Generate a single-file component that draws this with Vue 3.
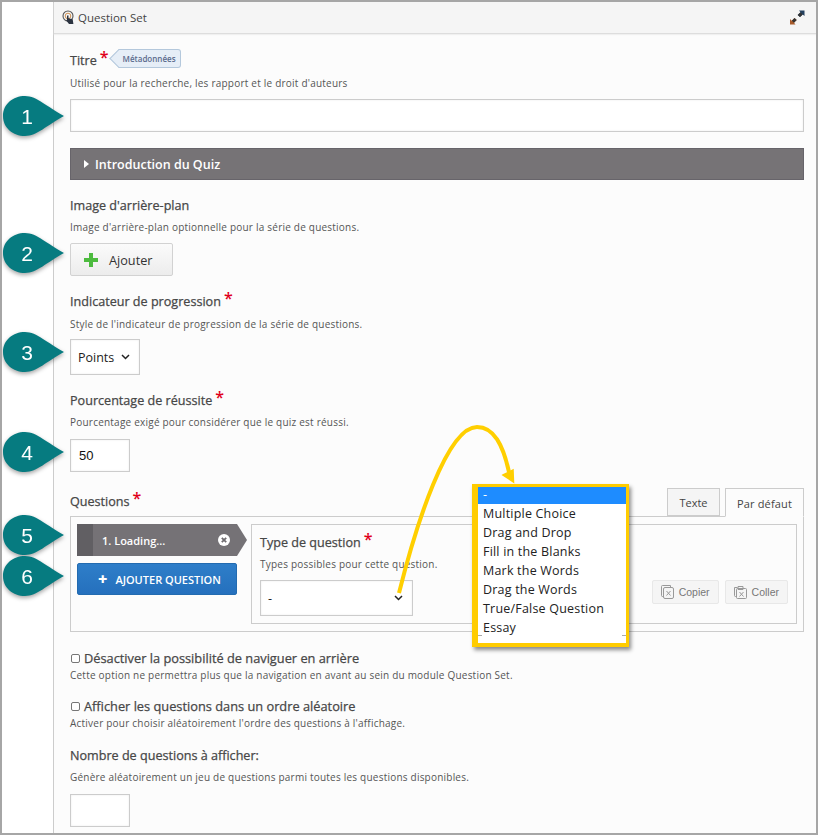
<script setup>
const callouts = [
  { n: 1, y: 117 },
  { n: 2, y: 254 },
  { n: 3, y: 353 },
  { n: 4, y: 453 },
  { n: 5, y: 536 },
  { n: 6, y: 577 }
]
const options = ['Multiple Choice', 'Drag and Drop', 'Fill in the Blanks', 'Mark the Words', 'Drag the Words', 'True/False Question', 'Essay']
</script>

<template>
  <div class="frame">
    <div class="rail"></div>
    <main class="panel">
      <header class="head">
        <div class="head-title">
          <svg class="qs-icon" width="13" height="15" viewBox="0 0 13 15" fill="none">
            <circle cx="6" cy="6" r="5" stroke="#555" stroke-width="1.100" />
            <circle cx="6" cy="6" r="2.800" stroke="#c9853f" stroke-width="0.900" />
            <path d="M5 5.400h1.500v2.900l4.200 .9.700 4.800H7L4 10.300l1-.5z" fill="#2b3340" />
          </svg>
          <span>Question Set</span>
        </div>
        <svg width="16" height="15" viewBox="0 0 16 15">
          <path d="M10 0.500H15.500V6L13.700 4.400 11 7.100 8.700 5 11.500 2.200z" fill="#24405f" />
          <path d="M1 9L2.800 10.700 5.500 8 7.700 10 5 12.800 6.500 14.500H1z" fill="#a85a2a" />
          <path d="M2.800 10.700L5.500 8 7.700 10 5 12.800zM11 7.100L8.700 5 11.500 2.200 13.700 4.400z" fill="#333" />
        </svg>
      </header>

      <div class="form">
        <section class="f-title">
          <div class="label-row">
            <span class="label">Titre</span><span class="req">*</span>
            <span class="tag"><span class="tag-text">Métadonnées</span></span>
          </div>
          <p class="desc">Utilisé pour la recherche, les rapport et le droit d'auteurs</p>
          <input class="input wide" type="text" />
        </section>

        <div class="collapse">
          <span class="caret"></span>
          <span>Introduction du Quiz</span>
        </div>

        <section class="f-image">
          <div class="label-row"><span class="label">Image d'arrière-plan</span></div>
          <p class="desc">Image d'arrière-plan optionnelle pour la série de questions.</p>
          <button class="add-btn" type="button">
            <svg width="14" height="14" viewBox="0 0 14 14"><path d="M5 0h4v5h5v4H9v5H5V9H0V5h5z" fill="#4dbb3f" /></svg>
            <span>Ajouter</span>
          </button>
        </section>

        <section class="f-progress">
          <div class="label-row"><span class="label">Indicateur de progression</span><span class="req">*</span></div>
          <p class="desc">Style de l'indicateur de progression de la série de questions.</p>
          <div class="select points">
            <span>Points</span>
            <svg width="9" height="6" viewBox="0 0 9 6" fill="none"><path d="M1 1l3.500 3.500L8 1" stroke="#222" stroke-width="1.500" /></svg>
          </div>
        </section>

        <section class="f-pass">
          <div class="label-row"><span class="label">Pourcentage de réussite</span><span class="req">*</span></div>
          <p class="desc">Pourcentage exigé pour considérer que le quiz est réussi.</p>
          <input class="input small" type="text" value="50" />
        </section>

        <section class="f-questions">
          <div class="q-head">
            <div class="label-row"><span class="label">Questions</span><span class="req">*</span></div>
            <div class="tabs">
              <span class="tab">Texte</span>
              <span class="tab active">Par défaut</span>
            </div>
          </div>
          <div class="q-box">
            <div class="q-side">
              <div class="q-item">
                <span class="q-grip"></span>
                <span class="q-name">1. Loading...</span>
                <svg class="q-x" width="12" height="12" viewBox="0 0 12 12">
                  <circle cx="6" cy="6" r="6" fill="#fff" />
                  <path d="M3.800 3.800l4.400 4.400M8.200 3.800L3.800 8.200" stroke="#6f6c70" stroke-width="1.800" />
                </svg>
              </div>
              <button class="q-add" type="button"><b>+</b><span>AJOUTER QUESTION</span></button>
            </div>
            <div class="q-main">
              <div class="label-row"><span class="label">Type de question</span><span class="req">*</span></div>
              <p class="desc">Types possibles pour cette question.</p>
              <div class="q-row">
                <div class="select type">
                  <span>-</span>
                  <svg width="9" height="6" viewBox="0 0 9 6" fill="none"><path d="M1 1l3.500 3.500L8 1" stroke="#222" stroke-width="1.500" /></svg>
                </div>
                <div class="q-tools">
                  <span class="tool">
                    <svg width="13" height="14" viewBox="0 0 13 14" fill="none" stroke="#999"><rect x="2.500" y="2.500" width="10" height="11" rx="1.500" /><path d="M2.500 11.500h-1a1 1 0 0 1-1-1V1.500a1 1 0 0 1 1-1h8v2M5.500 6l4 4.500M9.500 6l-4 4.500" /></svg>
                    Copier
                  </span>
                  <span class="tool">
                    <svg width="13" height="14" viewBox="0 0 13 14" fill="none" stroke="#999"><rect x="2.500" y="3.500" width="10" height="10" rx="1" /><path d="M2.500 11.500h-1a1 1 0 0 1-1-1V2.500h3M4 1.500h5v3H4zM5.500 7l4 4.500M9.500 7l-4 4.500" /></svg>
                    Coller
                  </span>
                </div>
              </div>
            </div>
          </div>
        </section>

        <section class="f-check first">
          <label class="check"><input type="checkbox" /><span>Désactiver la possibilité de naviguer en arrière</span></label>
          <p class="desc tight">Cette option ne permettra plus que la navigation en avant au sein du module Question Set.</p>
        </section>
        <section class="f-check">
          <label class="check"><input type="checkbox" /><span>Afficher les questions dans un ordre aléatoire</span></label>
          <p class="desc tight">Activer pour choisir aléatoirement l'ordre des questions à l'affichage.</p>
        </section>

        <section class="f-count">
          <div class="label-row"><span class="label">Nombre de questions à afficher:</span></div>
          <p class="desc">Génère aléatoirement un jeu de questions parmi toutes les questions disponibles.</p>
          <input class="input small" type="text" />
        </section>
      </div>
    </main>

    <svg
      v-for="c in callouts"
      :key="c.n"
      class="callout"
      :style="{ top: c.y - 24 + 'px' }"
      width="68"
      height="46"
      viewBox="0 0 68 46"
    >
      <path d="M3 21C3 9 13 1 25 1 37 1 47 12 64 21 47 30 37 41 25 41 13 41 3 33 3 21z" fill="#067b80" />
      <text x="27" y="29" text-anchor="middle" class="callout-num">{{ c.n }}</text>
    </svg>

    <svg class="arrow" width="818" height="835" viewBox="0 0 818 835" fill="none">
      <path d="M399 593C416 525 447 427 477 427 494 427 503 445 509 472" stroke="#ffcf00" stroke-width="4" />
      <path d="M503 475L513 470 513.500 482z" fill="#ffcf00" stroke="#ffcf00" stroke-width="1.500" />
    </svg>

    <div class="listbox">
      <div class="opt selected">-</div>
      <div v-for="o in options" :key="o" class="opt">{{ o }}</div>
      <span class="tick left"></span>
      <span class="tick right"></span>
    </div>
  </div>
</template>

<style scoped>
.frame {
  position: relative;
  width: 818px;
  height: 835px;
  box-sizing: border-box;
  display: flex;
  background: #fff;
  border: 2px solid #a6a6a6;
  overflow: hidden;
  font-family: "Open Sans", "Liberation Sans", sans-serif;
  color: #444;
}
.rail {
  width: 51px;
  flex: none;
}
.panel {
  flex: 1;
  min-width: 0;
  border-left: 1px solid #ccc;
  background: #fcfcfc;
}
.head {
  height: 32px;
  box-sizing: border-box;
  padding: 0 11px 0 8px;
  display: flex;
  align-items: center;
  justify-content: space-between;
  background: #f5f5f5;
  border-bottom: 1px solid #ddd;
  box-shadow: 0 1px 1px #f0f0f0;
  font-size: 11.500px;
  color: #444;
}
.head-title {
  display: flex;
  align-items: center;
  gap: 3px;
}
.form {
  padding: 0 12px 0 16px;
}
.label-row {
  display: flex;
  align-items: flex-start;
  height: 20px;
}
.label {
  margin-top: 1px;
  font-size: 12.600px;
  font-weight: 400;
  -webkit-text-stroke: 0.250px #474747;
  line-height: 20px;
  color: #474747;
}
.req {
  color: #e0001b;
  font-size: 16px;
  font-weight: 600;
  line-height: 16px;
  margin-left: 3px;
  margin-top: -1px;
}
.tag {
  position: relative;
  margin-left: 9px;
  margin-top: -1px;
  height: 19px;
  padding: 0 4px 0 5px;
  font-size: 8px;
  font-weight: 600;
  line-height: 17px;
  color: #5a6a8c;
  background: #e6eef7;
  border: 1px solid #b4c8dc;
  border-left: none;
  border-radius: 0 3px 3px 0;
  box-sizing: border-box;
}
.tag::before {
  content: "";
  position: absolute;
  left: -6px;
  top: 2px;
  width: 12px;
  height: 12px;
  background: #e6eef7;
  border-left: 1px solid #b4c8dc;
  border-bottom: 1px solid #b4c8dc;
  transform: rotate(45deg);
}
.tag-text {
  position: relative;
}
.desc {
  margin: 5px 0 0;
  font-size: 10px;
  line-height: 14px;
  letter-spacing: 0.220px;
  color: #555;
}
.desc.tight {
  margin-top: 0;
}
.input {
  display: block;
  box-sizing: border-box;
  height: 33px;
  margin-top: 9px;
  border: 1px solid #ccc;
  background: #fff;
  box-shadow: inset 0 0 2px #e6e6e6;
  outline: none;
  font-family: "Liberation Sans", sans-serif;
  font-size: 13px;
  color: #111;
  padding: 0 8px;
}
.input.wide {
  width: 100%;
}
.input.small {
  width: 60px;
}
.f-title {
  padding-top: 16px;
}
.f-title .desc {
  margin-top: 6px;
}
.collapse {
  margin-top: 16px;
  height: 32px;
  box-sizing: border-box;
  display: flex;
  align-items: center;
  gap: 6px;
  padding-left: 13px;
  background: #767376;
  border: 1px solid #67646a;
  color: #fff;
  font-size: 12.500px;
  font-weight: 600;
}
.caret {
  width: 0;
  height: 0;
  border-left: 5px solid #fff;
  border-top: 4px solid transparent;
  border-bottom: 4px solid transparent;
}
.f-image {
  padding-top: 15px;
}
.add-btn {
  display: flex;
  align-items: center;
  gap: 11px;
  box-sizing: border-box;
  width: 103px;
  height: 33px;
  margin-top: 9px;
  padding: 0 0 0 13px;
  border: 1px solid #d2d2d2;
  border-radius: 2px;
  background: linear-gradient(#fbfbfb, #ececec);
  font-family: inherit;
  font-size: 12.700px;
  color: #333;
}
.f-progress {
  padding-top: 15px;
}
.f-progress .desc {
  margin-top: 6px;
}
.select {
  box-sizing: border-box;
  display: flex;
  align-items: center;
  justify-content: space-between;
  border: 1px solid #ccc;
  background: #fff;
  box-shadow: inset 0 0 2px #e6e6e6;
  color: #222;
  font-size: 12.500px;
}
.select.points {
  width: 70px;
  height: 36px;
  margin-top: 8px;
  padding: 0 9px 0 7px;
}
.f-pass {
  padding-top: 15px;
}
.f-pass .input,
.f-count .input {
  margin-top: 10px;
}
.f-questions {
  padding-top: 15px;
}
.q-head {
  height: 29px;
  display: flex;
  justify-content: space-between;
  align-items: flex-end;
  position: relative;
}
.q-head .label-row {
  align-self: flex-start;
  padding-top: 4px;
}
.tabs {
  display: flex;
  gap: 5px;
  margin-bottom: -1px;
  position: relative;
}
.tab {
  box-sizing: border-box;
  height: 28px;
  width: 53px;
  justify-content: center;
  display: flex;
  align-items: center;
  border: 1px solid #ccc;
  background: #f5f5f5;
  font-size: 11px;
  color: #444;
}
.tab.active {
  width: 79px;
  background: #fcfcfc;
  border-bottom-color: #fcfcfc;
  height: 29px;
  padding-top: 2px;
  letter-spacing: 0.150px;
}
.q-box {
  box-sizing: border-box;
  height: 116px;
  border: 1px solid #ccc;
  padding: 7px 6px 7px 6px;
  display: flex;
  gap: 4px;
}
.q-side {
  width: 170px;
  flex: none;
}
.q-item {
  position: relative;
  height: 32px;
  width: 170px;
  display: flex;
  align-items: center;
  background: #757276;
  clip-path: polygon(0 0, 160px 0, 170px 50%, 160px 100%, 0 100%);
  color: #fff;
  font-size: 11px;
  font-weight: 600;
}
.q-grip {
  width: 16px;
  height: 100%;
  background: #615f63;
}
.q-name {
  margin-left: 9px;
}
.q-x {
  position: absolute;
  left: 141px;
  top: 10px;
}
.q-add {
  display: flex;
  align-items: center;
  gap: 8px;
  box-sizing: border-box;
  width: 160px;
  height: 32px;
  margin-top: 7px;
  padding: 0 0 0 20px;
  border: 1px solid #236bb0;
  border-radius: 2px;
  background: linear-gradient(#2e7ec9, #2570bd);
  color: #fff;
  font-family: inherit;
  font-size: 11px;
  font-weight: 600;
}
.q-add b {
  font-size: 16px;
  line-height: 1;
}
.q-main {
  flex: 1;
  min-width: 0;
  box-sizing: border-box;
  border: 1px solid #ccc;
  padding: 7px 8px 0;
}
.q-row {
  margin-top: 9px;
  display: flex;
  justify-content: space-between;
  align-items: flex-start;
}
.select.type {
  width: 153px;
  height: 36px;
  padding: 0 9px 0 7px;
  color: #222;
}
.q-tools {
  display: flex;
  gap: 6px;
}
.tool {
  box-sizing: border-box;
  height: 24px;
  display: flex;
  align-items: center;
  gap: 5px;
  padding: 0 8px;
  background: #f5f5f5;
  border: 1px solid #e8e8e8;
  border-radius: 2px;
  font-family: "Liberation Sans", sans-serif;
  font-size: 10.500px;
  color: #777;
}
.f-check {
  padding-top: 14px;
}
.f-check.first {
  padding-top: 16px;
}
.f-check.first + .f-check {
  padding-top: 14px;
}
.check {
  display: flex;
  align-items: center;
  gap: 4px;
  height: 20px;
  font-size: 12.800px;
  font-weight: 400;
  -webkit-text-stroke: 0.250px #474747;
  color: #474747;
}
.check input {
  appearance: none;
  box-sizing: border-box;
  width: 9px;
  height: 9px;
  margin: 0 0 0 1px;
  border: 1px solid #767676;
  border-radius: 2px;
  background: #fff;
}
.f-count {
  padding-top: 15px;
}
.f-count .desc {
  margin-top: 5px;
}
.callout {
  position: absolute;
  left: -2px;
  filter: drop-shadow(0 2px 2px rgba(0, 0, 0, 0.35));
  overflow: visible;
}
.callout-num {
  font-family: "Liberation Sans", sans-serif;
  font-size: 21px;
  fill: #fff;
}
.arrow {
  position: absolute;
  left: -2px;
  top: -2px;
  pointer-events: none;
}
.listbox {
  position: absolute;
  left: 470px;
  top: 482px;
  width: 157px;
  height: 163px;
  box-sizing: border-box;
  background: #fff;
  border-style: solid;
  border-color: #ffcc00;
  border-width: 3px 3px 4px 6px;
  box-shadow: 2px 3px 4px rgba(0, 0, 0, 0.45);
  overflow: hidden;
}
.opt {
  height: 19px;
  line-height: 19px;
  padding-left: 5px;
  font-size: 12.500px;
  letter-spacing: 0.200px;
  color: #222;
}
.opt.selected {
  height: 17px;
  line-height: 15px;
  background: #1e8cff;
  color: #fff;
}
.tick {
  position: absolute;
  bottom: 7px;
  width: 4px;
  height: 1px;
  background: #aaa;
}
.tick.left {
  left: 0;
}
.tick.right {
  right: 0;
}
</style>

<style>
html, body { margin: 0; background: #fff; }
</style>
